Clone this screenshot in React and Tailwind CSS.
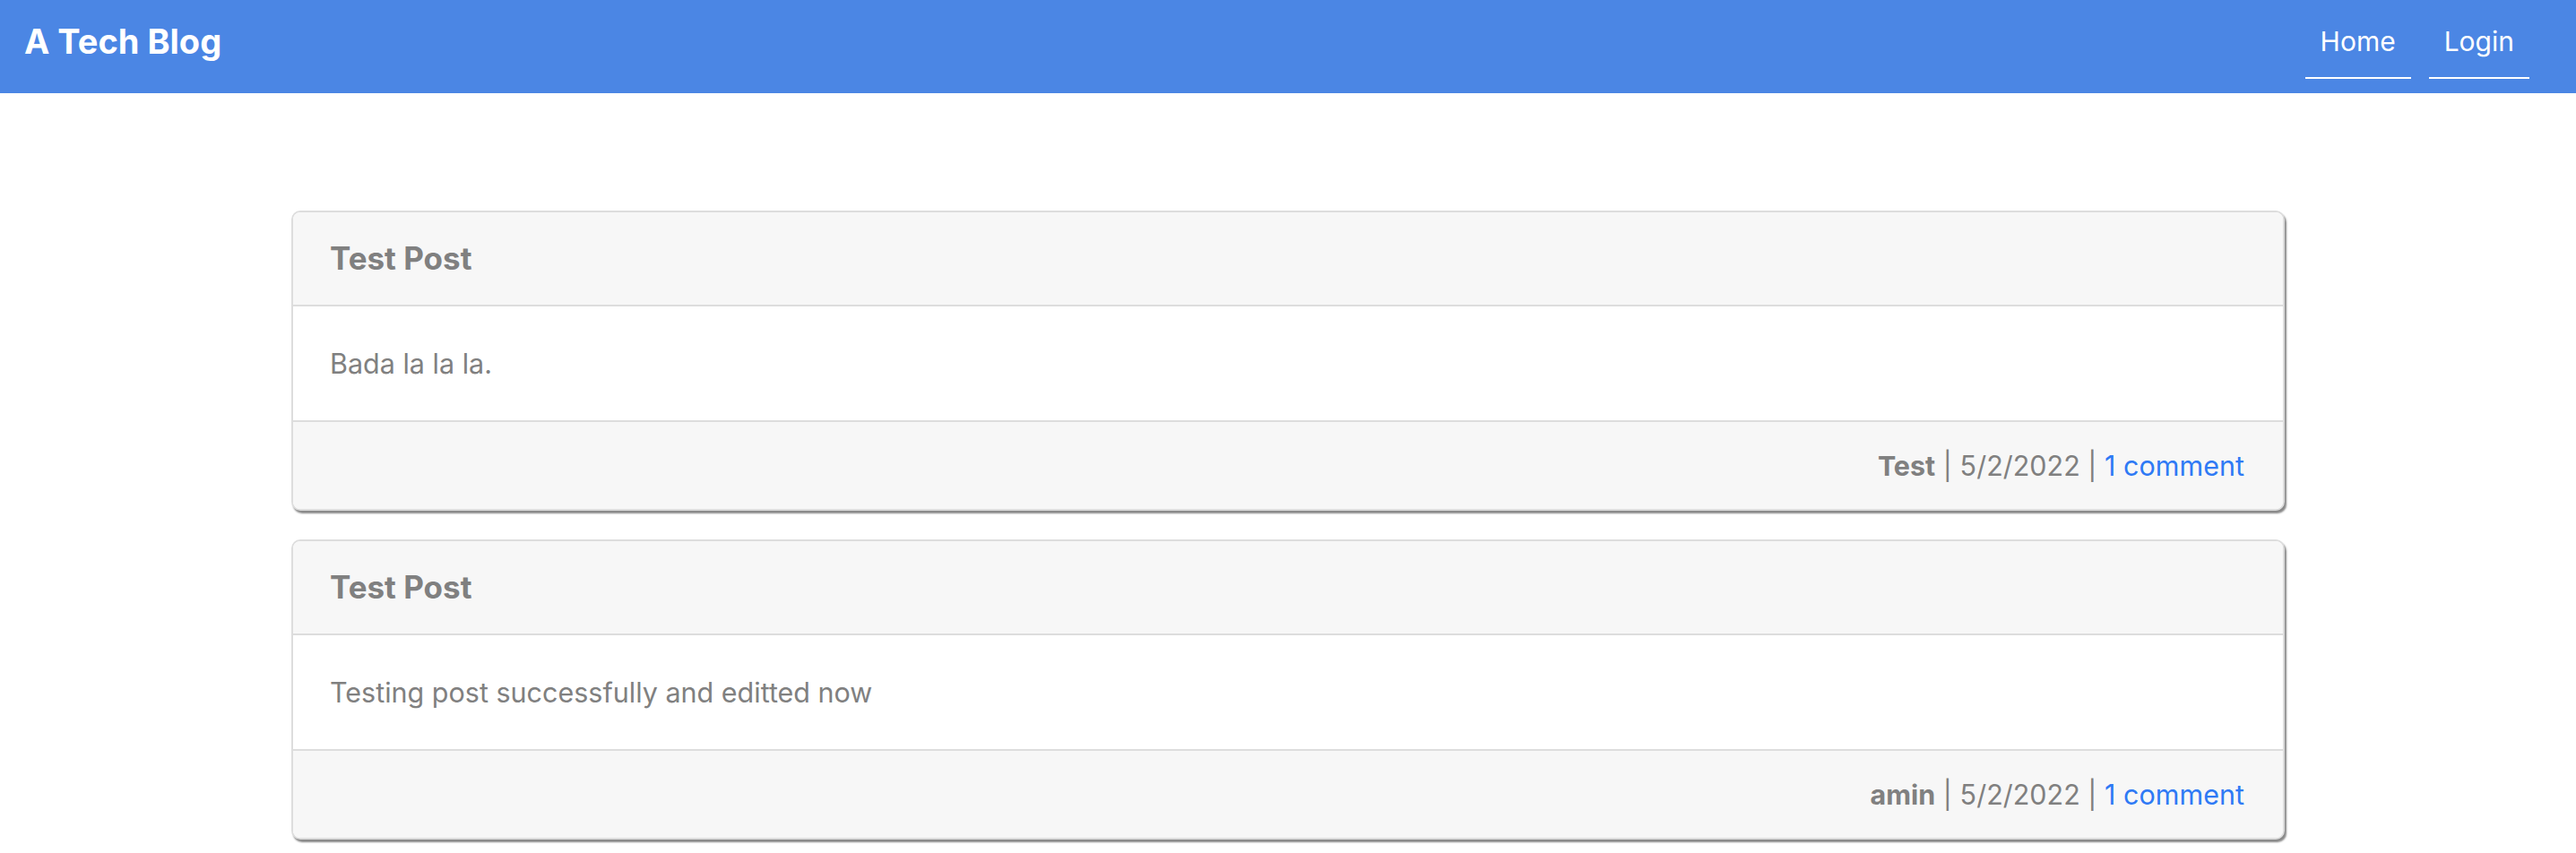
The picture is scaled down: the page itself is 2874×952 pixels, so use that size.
const posts = [
  { title: 'Test Post', body: 'Bada la la la.', author: 'Test', date: '5/2/2022', comments: 1 },
  { title: 'Test Post', body: 'Testing post successfully and editted now', author: 'amin', date: '5/2/2022', comments: 1 },
];

function PostCard({ post }) {
  return (
    <div className="border-2 border-[#dddddd] rounded-[10px] overflow-hidden shadow-[2px_3px_2px_#888888] bg-white">
      <div className="h-[105px] bg-[#f7f7f7] border-b-2 border-[#dddddd] flex items-center pl-[41px]">
        <h2 className="text-[35px] font-bold text-[#808080]">{post.title}</h2>
      </div>
      <div className="h-[129px] border-b-2 border-[#dddddd] flex items-center pl-[41px]">
        <p className="text-[30.5px] text-[#808080]">{post.body}</p>
      </div>
      <div className="h-[97px] bg-[#f7f7f7] flex items-center justify-end pr-[43px] text-[30.5px] text-[#808080]">
        <span>
          <span className="font-bold">{post.author}</span> | {post.date} |{' '}
          <a href="#" className="text-[#2f7af5]">
            {post.comments} comment{post.comments === 1 ? '' : 's'}
          </a>
        </span>
      </div>
    </div>
  );
}

export default function App() {
  return (
    <div className="min-h-screen bg-white font-['Inter',sans-serif]">
      <nav className="h-[104px] bg-[#4b86e4] flex items-start justify-between pl-[27px] pr-[52px]">
        <a href="#" className="mt-[27px] text-[38px] leading-none font-bold text-white">
          A Tech Blog
        </a>
        <div className="mt-[24px] flex gap-[20px]">
          <a href="#" className="block px-[17px] pt-[6px] pb-[24px] text-[30px] leading-[32px] text-white border-b-2 border-white">
            Home
          </a>
          <a href="#" className="block px-[17px] pt-[6px] pb-[24px] text-[30px] leading-[32px] text-white border-b-2 border-white">
            Login
          </a>
        </div>
      </nav>
      <main className="w-[2224px] mx-auto mt-[131px] flex flex-col gap-[32px]">
        {posts.map((post, i) => (
          <PostCard key={i} post={post} />
        ))}
      </main>
    </div>
  );
}
